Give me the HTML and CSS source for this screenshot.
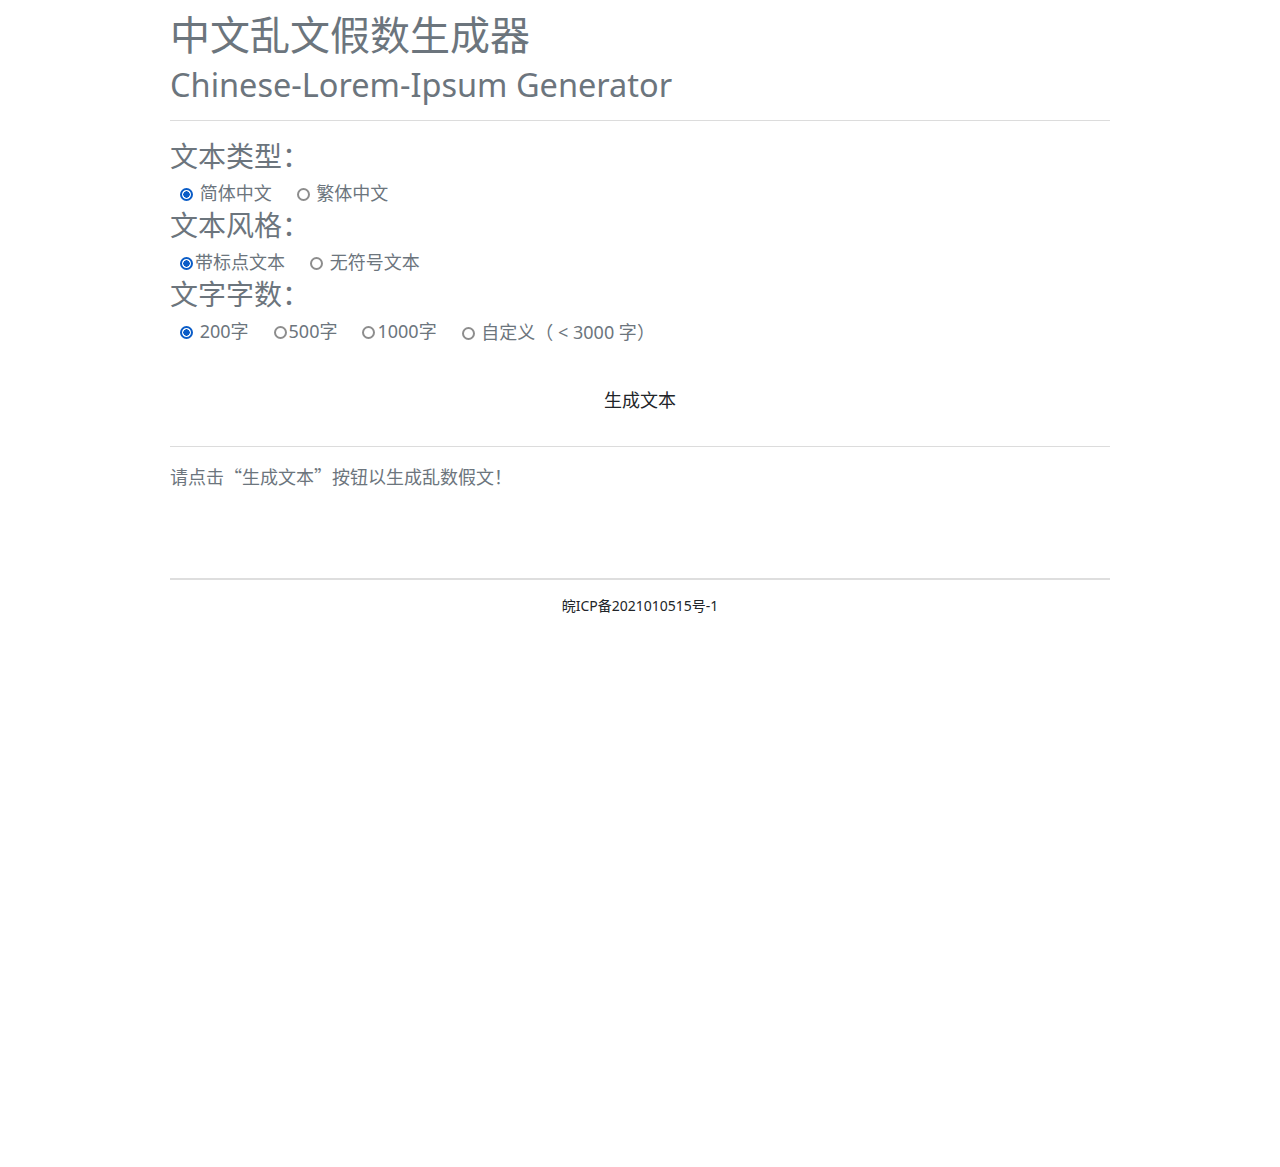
FILE: index.html
```html
<!DOCTYPE html>
<html lang="zh-CN">
<head>
<meta charset="UTF-8">
<meta name="viewport" content="width=device-width, initial-scale=1.0">
<title>中文乱文假数生成器</title>
<link rel="stylesheet" href="styles.css">
</head>
<body>
<div class="container">
    <header class="page-header">
        <h1 class="title">中文乱文假数生成器</h1>
        <h2 class="subtitle">Chinese-Lorem-Ipsum Generator</h2>
    </header>

    <form class="options">
        <h3 class="option-title">文本类型：</h3>
        <div class="option-row">
            <label class="opt"><input type="radio" name="type" checked> 简体中文</label>
            <label class="opt"><input type="radio" name="type"> 繁体中文</label>
        </div>

        <h3 class="option-title">文本风格：</h3>
        <div class="option-row">
            <label class="opt"><input type="radio" name="style" checked>带标点文本</label>
            <label class="opt"><input type="radio" name="style"> 无符号文本</label>
        </div>

        <h3 class="option-title">文字字数：</h3>
        <div class="option-row">
            <label class="opt"><input type="radio" name="count" checked> 200字</label>
            <label class="opt"><input type="radio" name="count">500字</label>
            <label class="opt"><input type="radio" name="count">1000字</label>
            <label class="opt"><input type="radio" name="count"> 自定义<span class="cjk">（</span> &lt; 3000 字<span class="cjk">）</span></label>
        </div>

        <div class="actions">
            <button type="button" class="btn-generate">生成文本</button>
        </div>
    </form>

    <div class="result">请点击<span class="cjk">“</span>生成文本<span class="cjk">”</span>按钮以生成乱数假文！</div>

    <footer class="footer">皖ICP备2021010515号-1</footer>
</div>
</body>
</html>
```

FILE: styles.css
```css
body {
    margin: 0;
    font-family: "Noto Sans", "Noto Sans CJK SC", sans-serif;
    color: #6c757d;
    background: #fff;
}

.container {
    width: 940px;
    margin: 0 auto;
}

.cjk {
    font-family: "Noto Sans CJK SC", sans-serif;
}

/* Header */
.page-header {
    padding-top: 11px;
    padding-bottom: 15px;
    border-bottom: 1px solid #dcdcdc;
}

.title {
    margin: 0;
    font-size: 40px;
    font-weight: normal;
    line-height: 48px;
}

.subtitle {
    margin: 6px 0 0;
    font-size: 32.5px;
    font-weight: normal;
    line-height: 40px;
}

/* Options */
.options {
    padding-top: 18px;
}

.option-title {
    margin: 0 0 6px;
    font-size: 28px;
    font-weight: normal;
    line-height: 34px;
}

.option-row {
    padding-left: 5px;
    font-size: 18px;
    line-height: 29px;
    display: flex;
}

.opt {
    margin-right: 20px;
}

.opt input {
    appearance: none;
    -webkit-appearance: none;
    box-sizing: border-box;
    width: 13px;
    height: 13px;
    margin: 0 2px 0 5px;
    border: 2px solid #8d8d8d;
    border-radius: 50%;
    vertical-align: -1px;
    background: #fff;
}

.opt input:checked {
    border-color: #0a5cc7;
    background: radial-gradient(circle, #0a5cc7 0 3px, #fff 3.4px);
}

.actions {
    text-align: center;
    padding: 34px 0 26px;
}

.btn-generate {
    border: none;
    background: none;
    font-family: inherit;
    font-size: 18px;
    color: #212529;
    padding: 6px 12px;
    line-height: 27px;
    cursor: pointer;
}

/* Result */
.result {
    border-top: 1px solid #dcdcdc;
    padding: 16px 0 87px;
    font-size: 18px;
    line-height: 27px;
}

.footer {
    border-top: 2px solid #dedede;
    text-align: center;
    font-size: 14px;
    color: #212529;
    padding-top: 15px;
    line-height: 21px;
}
```
